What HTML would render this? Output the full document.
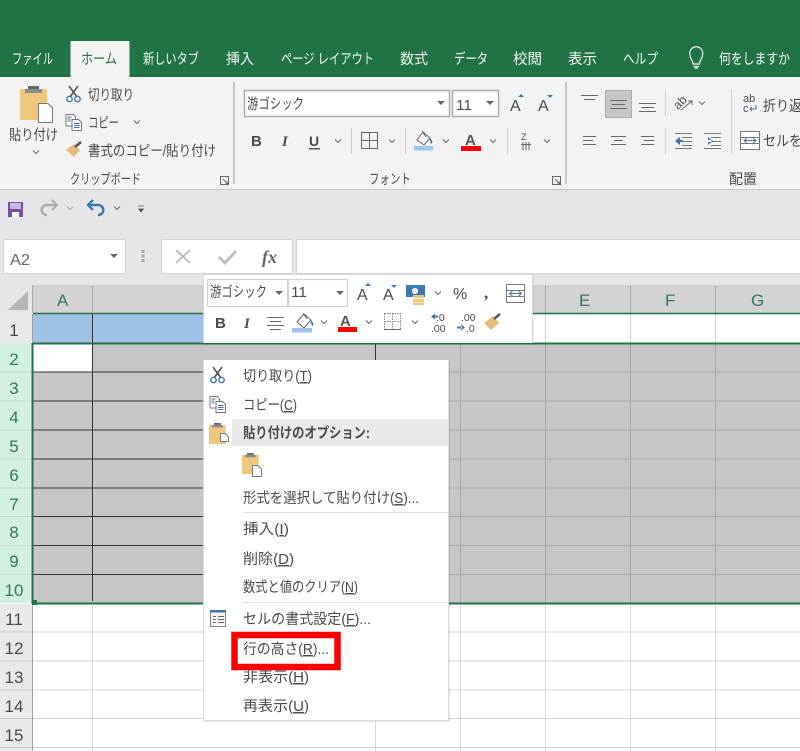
<!DOCTYPE html>
<html lang="ja"><head><meta charset="utf-8"><title>Excel</title>
<style>
html,body{margin:0;padding:0;background:#fff;overflow:hidden}
svg{display:block}
text{font-family:"Liberation Sans","Noto Sans CJK JP",sans-serif;font-size:14.5px;fill:#4a4a4a}
.t text,text.w{fill:#f4f8f5}
.u{text-decoration:underline}
.ch{fill:none;stroke:#666;stroke-width:1}
.ln{stroke:#666;stroke-width:1;fill:none}
</style></head><body>
<svg width="800" height="751" viewBox="0 0 800 751" xmlns="http://www.w3.org/2000/svg">
<defs>
<path id="c" class="ch" d="M-3-1.500L0 1.500L3-1.500"/>
<path id="a" d="M-4-2H4L0 2Z" fill="#666"/>
<g id="paste"><path d="M0 3H27V34H0Z" fill="#efc77f"/><path d="M5 3H22V7H5Z" fill="#8a8a8a"/><path d="M8 3V0H19V3Z" fill="#666"/></g>
<g id="cut" fill="none"><path d="M3 0L11 11M12 0L4 11" stroke="#555" stroke-width="1.600"/><circle cx="3.500" cy="13" r="2.700" stroke="#3f76ad" stroke-width="1.400"/><circle cx="11.500" cy="13" r="2.700" stroke="#3f76ad" stroke-width="1.400"/></g>
<g id="copy"><path d="M.5.5H8L10 3V12H.5Z" fill="#fff" stroke="#777"/><path d="M6.500 5.500H13L16 8.500V16.500H6.500Z" fill="#fff" stroke="#777"/><path d="M2 3H6M2 5H5M2 7H5M8.500 9.500H14M8.500 11.500H14M8.500 13.500H14" stroke="#3f76ad"/></g>
</defs>

<!-- chrome backgrounds -->
<rect width="800" height="77" fill="#217346"/>
<rect y="77" width="800" height="112" fill="#f3f3f3"/>
<rect y="189" width="800" height="1" fill="#c6c6c6"/>
<rect y="190" width="800" height="95" fill="#e6e6e6"/>

<!-- tabs -->
<rect x="70.500" y="41" width="59" height="36" fill="#f3f3f3"/>
<g class="t">
<text x="12" y="64" textLength="41" lengthAdjust="spacingAndGlyphs">ファイル</text>
<text x="143" y="64" textLength="56" lengthAdjust="spacingAndGlyphs">新しいタブ</text>
<text x="226" y="64" textLength="28" lengthAdjust="spacingAndGlyphs">挿入</text>
<text x="281" y="64" textLength="93" lengthAdjust="spacingAndGlyphs">ページ レイアウト</text>
<text x="400" y="64" textLength="28" lengthAdjust="spacingAndGlyphs">数式</text>
<text x="454" y="64" textLength="34" lengthAdjust="spacingAndGlyphs">データ</text>
<text x="513" y="64" textLength="29" lengthAdjust="spacingAndGlyphs">校閲</text>
<text x="568" y="64" textLength="29" lengthAdjust="spacingAndGlyphs">表示</text>
<text x="623" y="64" textLength="35" lengthAdjust="spacingAndGlyphs">ヘルプ</text>
<text x="719" y="64" textLength="71" lengthAdjust="spacingAndGlyphs">何をしますか</text>
</g>
<text x="81" y="64" textLength="36" lengthAdjust="spacingAndGlyphs" style="fill:#217346">ホーム</text>
<path d="M693 65C693 61 690 60 690 56A6.500 6.500 0 1 1 702.500 56C702.500 60 699.500 61 699.500 65ZM693.500 67.500H699M694.500 69H698" fill="none" stroke="#f4f8f5" stroke-width="1.200" transform="translate(0,-1)"/>

<!-- clipboard -->
<use href="#paste" x="20" y="86"/>
<path d="M38.500 103.500H48L52.500 108V122.500H38.500Z" fill="#fff" stroke="#777"/>
<text x="9" y="140" textLength="49" lengthAdjust="spacingAndGlyphs">貼り付け</text>
<use href="#c" x="36" y="152"/>
<use href="#cut" x="66" y="86"/>
<text x="88" y="100" textLength="46" lengthAdjust="spacingAndGlyphs">切り取り</text>
<use href="#copy" x="65.500" y="114"/>
<text x="88" y="128" textLength="31" lengthAdjust="spacingAndGlyphs">コピー</text>
<use href="#c" x="137" y="122"/>
<path d="M66 150L74 144L80 150L74 157Z" fill="#e2bd7b"/><path d="M75 147L81 142" stroke="#555" stroke-width="2.500"/>
<text x="88" y="156" textLength="128" lengthAdjust="spacingAndGlyphs">書式のコピー/貼り付け</text>
<text x="70" y="184" textLength="71" lengthAdjust="spacingAndGlyphs" style="font-size:14px">クリップボード</text>
<path d="M220.500 176.500H228.500V184.500H220.500ZM223 179L228 184M225 184H228V181" class="ln" stroke-width=".8"/>
<rect x="233" y="82" width="2" height="102" fill="#c8c8c8"/>

<!-- font -->
<rect x="244.500" y="90.500" width="205" height="26" fill="#fff" stroke="#ababab" stroke-width="1.500"/>
<rect x="452.500" y="90.500" width="46" height="26" fill="#fff" stroke="#ababab" stroke-width="1.500"/>
<text x="247" y="109" textLength="57" lengthAdjust="spacingAndGlyphs">游ゴシック</text>
<text x="456" y="110" textLength="16" lengthAdjust="spacingAndGlyphs">11</text>
<use href="#a" x="441" y="103"/><use href="#a" x="490" y="103"/>
<text x="510" y="111" style="font-size:16px">A</text><path d="M518 97H524L521 94Z" fill="#3f76ad"/>
<text x="538" y="111" style="font-size:16px">A</text><path d="M547 95H553L550 98Z" fill="#3f76ad"/>
<text x="251" y="146" style="font-weight:bold;font-size:15px">B</text>
<text x="282" y="146" style="font-weight:bold;font-style:italic;font-size:15px;font-family:'Liberation Serif',serif">I</text>
<text x="309" y="146" style="font-weight:bold;font-size:14px">U</text><rect x="309" y="148" width="11" height="1.500" fill="#555"/>
<use href="#c" x="338" y="141"/>
<rect x="351" y="128" width="1" height="26" fill="#cfcfcf"/>
<path d="M361.500 132.500H377.500V148.500H361.500ZM369.500 132.500V148.500M361.500 140.500H377.500" class="ln"/>
<use href="#c" x="392" y="141"/>
<rect x="405" y="128" width="1" height="26" fill="#cfcfcf"/>
<path d="M423 132L417 140L424 145L430 138ZM422 131L426 137" class="ln"/><path d="M429 137C433 141 433 143 431 144Z" fill="#3f76ad"/>
<rect x="414" y="146" width="19" height="4.500" fill="#a0c5e8"/>
<use href="#c" x="446" y="141"/>
<text x="465" y="145" style="font-size:15px;font-weight:bold;fill:#555">A</text>
<rect x="461" y="146" width="20" height="5" fill="#f00"/>
<use href="#c" x="493" y="141"/>
<rect x="507" y="128" width="1" height="26" fill="#cfcfcf"/>
<text x="521" y="140" style="font-size:9px">Z</text><path d="M521 144.500H531M523 142V150M526 142V150M529 142V150" class="ln"/>
<use href="#c" x="547" y="141"/>
<text x="369" y="184" textLength="42" lengthAdjust="spacingAndGlyphs" style="font-size:14px">フォント</text>
<path d="M552.500 176.500H560.500V184.500H552.500ZM555 179L560 184M557 184H560V181" class="ln" stroke-width=".8"/>
<rect x="565" y="82" width="2" height="102" fill="#c8c8c8"/>

<!-- alignment -->
<path d="M581 95.500H598M584 99.500H595" class="ln"/>
<rect x="605.500" y="90.500" width="26" height="27" fill="#c6c6c6" stroke="#ababab"/>
<path d="M610 100.500H627M612 104.500H625M610 108.500H627" class="ln"/>
<path d="M639 103.500H656M641 107.500H654M639 111.500H656" class="ln"/>
<rect x="665" y="90" width="1" height="26" fill="#cfcfcf"/>
<text x="0" y="0" transform="translate(678,110) rotate(-45)" style="font-size:12px">ab</text><path d="M681 110L692 101M688 101H692V105" class="ln"/>
<use href="#c" x="702" y="103"/>
<rect x="731" y="89" width="1" height="66" fill="#cfcfcf"/>
<text x="743" y="102" style="font-size:11px">ab</text><text x="743" y="112" style="font-size:11px">c</text>
<path d="M756 105V109H750M752 107L750 109L752 111" fill="none" stroke="#3f76ad"/>
<text x="763" y="111" textLength="52" lengthAdjust="spacingAndGlyphs">折り返し</text>
<path d="M583 136.500H596M583 140.500H593M583 144.500H596" class="ln"/>
<path d="M611 136.500H626M614 140.500H623M611 144.500H626" class="ln"/>
<path d="M641 136.500H654M644 140.500H654M641 144.500H654" class="ln"/>
<rect x="665" y="128" width="1" height="26" fill="#cfcfcf"/>
<path d="M675 133.500H692M682 137.500H692M682 141.500H692M682 145.500H692M675 148.500H692" stroke="#777" fill="none"/>
<path d="M675 141L680 137V145Z M679 140H683V142H679Z" fill="#3f76ad"/>
<path d="M704 133.500H721M711 137.500H721M711 141.500H721M711 145.500H721M704 148.500H721" stroke="#777" fill="none"/>
<path d="M709 141L704 137V145ZM704 140H709V142H704Z" fill="#3f76ad" transform="translate(4,0)"/>
<path d="M740.500 131.500H759.500V149.500H740.500ZM740.500 137.500H759.500M740.500 143.500H759.500" fill="#fff" stroke="#777"/>
<path d="M745 140.500H755" stroke="#3f76ad" fill="none"/><path d="M747 138L744 140.500L747 143M753 138L756 140.500L753 143" stroke="#3f76ad" fill="none"/>
<text x="763" y="146" textLength="65" lengthAdjust="spacingAndGlyphs">セルを結合</text>
<text x="729" y="184" textLength="28" lengthAdjust="spacingAndGlyphs" style="font-size:14px">配置</text>

<!-- QAT -->
<rect x="8" y="202" width="15" height="15" fill="#7a4ea6"/><rect x="10" y="203" width="11" height="6" fill="#c9b8e0"/><rect x="12" y="212" width="7" height="5" fill="#fff"/>
<path d="M56 205H47C40 205 40 215 47 215" fill="none" stroke="#aaa" stroke-width="2.500"/><path d="M52 200L57 205L52 210" fill="none" stroke="#aaa" stroke-width="2"/>
<use href="#c" x="70" y="208" style="opacity:.5"/>
<path d="M89 205H98C105 205 105 215 98 215" fill="none" stroke="#3d76b2" stroke-width="2.500"/><path d="M93 200L88 205L93 210" fill="none" stroke="#3d76b2" stroke-width="2.200"/>
<use href="#c" x="117" y="208"/>
<path d="M138 206H144M138.500 209H143.500L141 212Z" fill="#555" stroke="#555" stroke-width=".7"/>

<!-- formula bar -->
<rect x="3.500" y="239.500" width="122" height="34" fill="#fff" stroke="#d4d4d4"/>
<text x="10" y="265" textLength="20" lengthAdjust="spacingAndGlyphs" style="font-size:16px;fill:#666">A2</text>
<use href="#a" x="114" y="256"/>
<path d="M143 250V262" stroke="#aaa" stroke-width="3" stroke-dasharray="3 1.500"/>
<rect x="161.500" y="239.500" width="131" height="34" fill="#fff" stroke="#d4d4d4"/>
<rect x="296.500" y="239.500" width="504" height="34" fill="#fff" stroke="#d4d4d4"/>
<path d="M176 250L190 263M190 250L176 263" stroke="#bbb" stroke-width="1.800"/>
<path d="M219 257L225 263L236 251" stroke="#bbb" stroke-width="2.800" fill="none"/>
<text x="262" y="263" style="font-family:'Liberation Serif',serif;font-style:italic;font-weight:bold;font-size:18px;fill:#666">fx</text>

<!-- headers -->
<rect y="285" width="800" height="28" fill="#d2d2d2"/>
<rect y="285" width="32" height="29" fill="#e6e6e6"/>
<path d="M8 310H28V291Z" fill="#b5b5b5"/>
<path d="M92.500 285V313M545.500 285V313M630.500 285V313M715.500 285V313M32.500 285V313" stroke="#a8a8a8"/>
<text x="57" y="306" style="font-size:17px;fill:#2f7a58">A</text>
<text x="579" y="306" style="font-size:17px;fill:#2f7a58">E</text>
<text x="665" y="306" style="font-size:17px;fill:#2f7a58">F</text>
<text x="751" y="306" style="font-size:17px;fill:#2f7a58">G</text>
<rect y="314" width="32" height="29" fill="#e9e9e9"/>
<rect y="343" width="32" height="260" fill="#d3f0e0"/>
<rect y="604" width="32" height="147" fill="#e9e9e9"/>
<path d="M0 372H32M0 401H32M0 430H32M0 459H32M0 488H32M0 516.500H32M0 545.500H32M0 574.500H32" stroke="#c3dccd"/>
<path d="M0 632H32M0 661H32M0 690H32M0 718.500H32M0 747.500H32" stroke="#c6c6c6"/>
<rect x="32" y="314" width="1" height="437" fill="#9f9f9f"/>
<text x="14" y="336" text-anchor="middle" style="font-size:17px">1</text>
<text x="14" y="365" text-anchor="middle" style="font-size:17px;fill:#2f7a58">2</text>
<text x="14" y="394" text-anchor="middle" style="font-size:17px;fill:#2f7a58">3</text>
<text x="14" y="423" text-anchor="middle" style="font-size:17px;fill:#2f7a58">4</text>
<text x="14" y="452" text-anchor="middle" style="font-size:17px;fill:#2f7a58">5</text>
<text x="14" y="481" text-anchor="middle" style="font-size:17px;fill:#2f7a58">6</text>
<text x="14" y="510" text-anchor="middle" style="font-size:17px;fill:#2f7a58">7</text>
<text x="14" y="538" text-anchor="middle" style="font-size:17px;fill:#2f7a58">8</text>
<text x="14" y="567" text-anchor="middle" style="font-size:17px;fill:#2f7a58">9</text>
<text x="14" y="596" text-anchor="middle" style="font-size:17px;fill:#2f7a58">10</text>
<text x="14" y="625" text-anchor="middle" style="font-size:17px">11</text>
<text x="14" y="654" text-anchor="middle" style="font-size:17px">12</text>
<text x="14" y="683" text-anchor="middle" style="font-size:17px">13</text>
<text x="14" y="712" text-anchor="middle" style="font-size:17px">14</text>
<text x="14" y="741" text-anchor="middle" style="font-size:17px">15</text>

<!-- cells -->
<rect x="33" y="314" width="767" height="29" fill="#fff"/>
<rect x="33" y="314" width="500" height="29" fill="#9dc3e6"/>
<rect x="33" y="344" width="767" height="259" fill="#c6c6c6"/>
<rect x="33" y="344" width="59" height="28" fill="#fff"/>
<path d="M545.500 314V343M630.500 314V343M715.500 314V343" stroke="#d4d4d4"/>
<path d="M375.500 344V603M460.500 344V603M545.500 344V603M630.500 344V603M715.500 344V603" stroke="#a8a8a8"/>
<path d="M375 372H800M375 401H800M375 430H800M375 459H800M375 488H800M375 516.500H800M375 545.500H800M375 574.500H800" stroke="#a8a8a8"/>
<path d="M33 372H375M33 401H375M33 430H375M33 459H375M33 488H375M33 516.500H375M33 545.500H375M33 574.500H375" stroke="#333"/>
<path d="M92.500 314V601M375.500 344V362" stroke="#333"/>
<path d="M33 632H800M33 661H800M33 690H800M33 718.500H800M33 747.500H800" stroke="#d6d6d6"/>
<path d="M92.500 605V751M375.500 605V751M460.500 605V751M545.500 605V751M630.500 605V751M715.500 605V751" stroke="#d6d6d6"/>
<path d="M33 313.500H800" stroke="#217346" stroke-width="1.500"/>
<path d="M33 343.500H800" stroke="#217346" stroke-width="2"/>
<path d="M33 603.500H800" stroke="#217346" stroke-width="2"/>
<path d="M32.500 343V604" stroke="#217346" stroke-width="2"/>
<rect x="32" y="600" width="5" height="5" fill="#217346"/>

<!-- mini toolbar -->
<rect x="204" y="275" width="330" height="70" fill="#000" opacity=".05"/>
<rect x="203" y="274" width="330" height="69" fill="#fff"/>
<path d="M203 274.500H533M532.500 274V343M203.500 274V343" stroke="#d8d8d8"/>
<rect x="207.500" y="279.500" width="80" height="27" fill="#fff" stroke="#d4d4d4" stroke-width="1.200"/>
<rect x="288.500" y="279.500" width="59" height="27" fill="#fff" stroke="#d4d4d4" stroke-width="1.200"/>
<text x="210" y="297" textLength="57" lengthAdjust="spacingAndGlyphs">游ゴシック</text>
<text x="291" y="297" textLength="16" lengthAdjust="spacingAndGlyphs">11</text>
<use href="#a" x="279" y="293"/><use href="#a" x="340" y="293"/>
<text x="357" y="300" style="font-size:16px">A</text><path d="M365 286H371L368 283Z" fill="#3f76ad"/>
<text x="383" y="300" style="font-size:16px">A</text><path d="M391 285H397L394 288Z" fill="#3f76ad"/>
<rect x="406" y="285" width="19" height="12" fill="#3f76ad"/><circle cx="415" cy="291" r="3" fill="#fff"/>
<rect x="413" y="295" width="11" height="3" fill="#efc77f"/><rect x="413" y="299" width="11" height="3" fill="#efc77f"/><rect x="413" y="302.500" width="11" height="2.500" fill="#efc77f"/>
<use href="#c" x="438" y="293"/>
<text x="453" y="299" style="font-size:16px">%</text>
<text x="484" y="298" style="font-weight:bold;font-size:17px;font-family:'Liberation Serif',serif">,</text>
<path d="M506.500 284.500H524.500V302.500H506.500ZM506.500 290.500H524.500M506.500 296.500H524.500" fill="#fff" stroke="#777"/>
<path d="M510 293.500H521M512.500 291L509.500 293.500L512.500 296M518.500 291L521.500 293.500L518.500 296" stroke="#3f76ad" fill="none"/>

<text x="215" y="328" style="font-weight:bold;font-size:15px">B</text>
<text x="244" y="328" style="font-weight:bold;font-style:italic;font-size:15px;font-family:'Liberation Serif',serif">I</text>
<path d="M267 317.500H284M270 321.500H281M267 325.500H284M270 329.500H281" class="ln"/>
<path d="M304 314L297 322L304 328L311 320ZM303 313L307 319" class="ln"/><path d="M310 319C314 323 314 325 312 326Z" fill="#3f76ad"/>
<rect x="292" y="328" width="20" height="4.500" fill="#a0c5e8"/>
<use href="#c" x="324" y="322"/>
<text x="340" y="326" style="font-size:15px;font-weight:bold;fill:#555">A</text>
<rect x="338" y="327" width="19" height="5" fill="#f00"/>
<use href="#c" x="369" y="322"/>
<path d="M384.500 313.500H400.500V329.500H384.500ZM392.500 313.500V329.500M384.500 321.500H400.500" fill="none" stroke="#888" stroke-dasharray="1.500 1"/>
<path d="M384 329.500H401" stroke="#666"/>
<use href="#c" x="415" y="322"/>
<text x="436" y="321" style="font-size:10.500px">.0</text><text x="431" y="332" style="font-size:10.500px">.00</text>
<path d="M431 316.500L435 313.500V319.500ZM434 315.500H438V317.500H434Z" fill="#3f76ad"/>
<text x="461" y="321" style="font-size:10.500px">.00</text><text x="466" y="332" style="font-size:10.500px">.0</text>
<path d="M465 327.500L461 324.500V330.500ZM457 326.500H462V328.500H457Z" fill="#3f76ad"/>
<path d="M484 323L493 316L499 323L491 330Z" fill="#e2bd7b"/><path d="M494 319L500 314" stroke="#555" stroke-width="2.500"/>

<!-- context menu -->
<rect x="205" y="362" width="245" height="360" fill="#000" opacity=".1"/>
<rect x="203" y="360" width="246" height="361" fill="#fff"/>
<path d="M203.500 360V721M448.500 360V721M203 720.500H449" stroke="#dcdcdc"/>
<rect x="232" y="419" width="216" height="27" fill="#eaeaea"/>
<use href="#cut" x="210" y="367"/>
<use href="#copy" x="209.500" y="396"/>
<use href="#paste" transform="translate(209,423) scale(.62)"/>
<path d="M220.500 433.500H225L228.500 437V441.500H220.500Z" fill="#fff" stroke="#777"/>
<use href="#paste" transform="translate(242,453) scale(.62)"/>
<path d="M252.500 465.500H258L261.500 469V476.500H252.500Z" fill="#fff" stroke="#777"/>

<text x="243" y="381" textLength="69" lengthAdjust="spacingAndGlyphs">切り取り(<tspan class="u">T</tspan>)</text>
<text x="243" y="410" textLength="54" lengthAdjust="spacingAndGlyphs">コピー(<tspan class="u">C</tspan>)</text>
<text x="243" y="438" textLength="127" lengthAdjust="spacingAndGlyphs" style="font-weight:bold">貼り付けのオプション:</text>
<text x="243" y="503" textLength="176" lengthAdjust="spacingAndGlyphs">形式を選択して貼り付け(<tspan class="u">S</tspan>)...</text>
<rect x="243" y="512" width="205" height="1" fill="#dedede"/>
<text x="243" y="534" textLength="46" lengthAdjust="spacingAndGlyphs">挿入(<tspan class="u">I</tspan>)</text>
<text x="243" y="564" textLength="51" lengthAdjust="spacingAndGlyphs">削除(<tspan class="u">D</tspan>)</text>
<text x="243" y="592" textLength="115" lengthAdjust="spacingAndGlyphs">数式と値のクリア(<tspan class="u">N</tspan>)</text>
<rect x="243" y="602" width="205" height="1" fill="#dedede"/>
<path d="M210.500 610.500H225.500V626.500H210.500Z" fill="#f4f4f4" stroke="#888"/><rect x="210" y="610" width="16" height="2.500" fill="#3f76ad"/>
<path d="M218 616.500H224M218 619.500H224M218 622.500H224M213 616.500H216M213 619.500H216M213 622.500H216" stroke="#666" fill="none"/>
<text x="243" y="624" textLength="128" lengthAdjust="spacingAndGlyphs">セルの書式設定(<tspan class="u">F</tspan>)...</text>
<text x="243" y="654" textLength="86" lengthAdjust="spacingAndGlyphs">行の高さ(<tspan class="u">R</tspan>)...</text>
<text x="243" y="682" textLength="66" lengthAdjust="spacingAndGlyphs">非表示(<tspan class="u">H</tspan>)</text>
<text x="243" y="711" textLength="66" lengthAdjust="spacingAndGlyphs">再表示(<tspan class="u">U</tspan>)</text>
<rect x="234.500" y="635" width="103" height="32" fill="none" stroke="#f00" stroke-width="6.500"/>
</svg>
</body></html>
